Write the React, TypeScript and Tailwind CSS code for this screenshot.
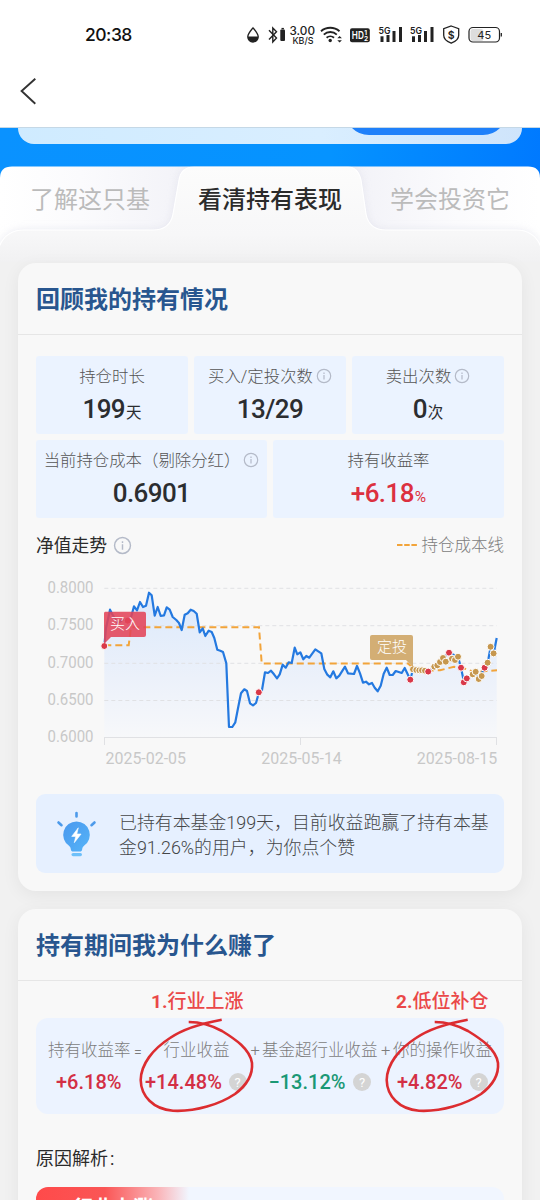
import type { ReactNode } from 'react';

type Point = [number, number];

const navLine: Point[] = [
    [68.3, 76], [70, 58], [72.7, 46], [74, 39.7], [76.7, 45], [81.7, 53], [88, 49], [94.3, 50], [98, 36.3], [101, 40.3],
    [104, 32], [107, 37], [110, 35.7], [113, 22.7], [115.7, 25.3], [118.7, 45.7], [121.7, 37], [124.7, 46], [128, 45.3],
    [130.7, 37.3], [133.7, 39.7], [136.7, 47], [140.3, 50], [143, 53], [145.7, 60], [148.7, 44.7], [151.7, 43.3],
    [154.7, 39.7], [157.7, 41], [160.7, 43.7], [163.7, 62.3], [166.7, 58.3], [169.3, 66], [172.7, 60.7], [175.7, 62],
    [178.3, 68], [181.3, 79.7], [184.3, 80.7], [187, 82], [190.3, 93.3], [193, 157], [196.3, 157], [199.3, 152.3],
    [202, 138.3], [205, 123.3], [208.3, 119.3], [211, 121], [214, 133.3], [217, 135.3], [220, 133], [223, 122.3],
    [226, 120], [229, 102.3], [232, 103], [235, 100.7], [238, 104.3], [241, 108.3], [243.7, 104.3], [246.7, 94.7],
    [249.7, 97.7], [252.7, 92.3], [255.7, 93], [258.7, 77.7], [261.3, 84.3], [264.3, 82.3], [267.3, 89.3], [270.3, 86],
    [273.3, 87.7], [279.3, 79.3], [285.3, 83.3], [288.3, 99], [291.3, 104.7], [294.3, 107.3], [297.3, 101.3],
    [300.3, 108.3], [303.3, 105.7], [309, 96.7], [312, 103.3], [318, 104], [321, 96], [324, 103.3], [327, 112.7],
    [330, 111.7], [333, 114.3], [336, 113], [338.7, 117.7], [341.7, 121.3], [344.7, 115.7], [347.7, 103.7],
    [350.7, 97.7], [353.7, 105], [356.7, 105], [359.7, 101], [365.7, 103], [368.7, 98], [371.7, 104.3], [374.3, 109.7],
    [377, 99.3], [392.3, 101.7], [401, 95], [407, 88], [413, 82.7], [422, 86.7], [425, 97.7], [428, 112.3],
    [431, 108.3], [439.7, 101.7], [442.7, 109], [448.7, 97.7], [451.7, 92.7], [454.7, 76.7], [457.7, 83.3], [460.7, 68],
];

const costLine: Point[] = [
    [68.3, 75.3], [92.7, 75.3], [95, 57.2], [223, 57.2], [225.7, 93.4], [372, 93.4], [377, 98], [390, 100.5],
    [404, 100.3], [418, 96.7], [430, 99], [440, 102.5], [450, 101], [461, 100.3],
];

const trades: { x: number; y: number; buy?: boolean }[] = [
    { x: 68.3, y: 76, buy: true },
    { x: 91.7, y: 50.7, buy: true },
    { x: 222.8, y: 122.3, buy: true },
    { x: 374.3, y: 109.7, buy: true },
    { x: 377, y: 99.3 },
    { x: 380.3, y: 100 },
    { x: 383.3, y: 100.3 },
    { x: 386, y: 100.3 },
    { x: 389, y: 100.7 },
    { x: 392.2, y: 101.6, buy: true },
    { x: 398.3, y: 96.7 },
    { x: 401.3, y: 95.3 },
    { x: 404, y: 92 },
    { x: 407, y: 88 },
    { x: 409.8, y: 91.7 },
    { x: 413, y: 82.7, buy: true },
    { x: 416, y: 88.7 },
    { x: 419, y: 90 },
    { x: 422, y: 86.7 },
    { x: 425, y: 97.7, buy: true },
    { x: 427.8, y: 112.3, buy: true },
    { x: 430.8, y: 108.4, buy: true },
    { x: 436.7, y: 104.3 },
    { x: 439.7, y: 101.8 },
    { x: 442.7, y: 109 },
    { x: 445.7, y: 106 },
    { x: 448.6, y: 97.7, buy: true },
    { x: 451.6, y: 92.7 },
    { x: 454.6, y: 76.8 },
    { x: 457.6, y: 83.4 },
];

const yTicks = [
    { y: 18.3, label: '0.8000' },
    { y: 55.7, label: '0.7500' },
    { y: 93.3, label: '0.7000' },
    { y: 130.5, label: '0.6500' },
    { y: 167.5, label: '0.6000' },
];

const xTicks = [
    { x: 69.5, label: '2025-02-05' },
    { x: 225.3, label: '2025-05-14' },
    { x: 380.7, label: '2025-08-15' },
];

const toPoints = (points: Point[]) => points.map((p) => p.join(',')).join(' ');

function InfoIcon({ className }: { className?: string }) {
    return (
        <svg viewBox="0 0 16 16" className={className} fill="none" stroke="#b4bac8" strokeWidth="1.2">
            <circle cx="8" cy="8" r="6.7" />
            <path d="M8 7v4.6M8 4.4v1.5" />
        </svg>
    );
}

function StatusBar() {
    return (
        <div className="flex h-[69px] items-center pl-[85px] font-[Inter,sans-serif]">
            <span className="w-[160px] text-[17.5px] font-medium leading-none tracking-[-0.5px] text-[#111]">20:38</span>
            <svg width="260" height="28" viewBox="245 21 260 28" fill="none" stroke="#222" className="shrink-0">
                {/* drop */}
                <path d="M253 27.8c-2.2 2.8-5.2 6-5.2 9a5.2 5.2 0 0 0 10.4 0c0-3-3-6.2-5.2-9z" strokeWidth="1.3" />
                <path d="M247.6 36.5h10.8a5.4 5.4 0 0 1-10.8 0z" fill="#222" stroke="none" />
                {/* bluetooth */}
                <path d="M269 30.300l7.500 7.700-3.700 4v-14l3.700 3.800-7.500 7.700" strokeWidth="1.4" />
                <rect x="280.3" y="29.5" width="4.7" height="11.5" rx="1" fill="#222" stroke="none" />
                <path d="M281.5 28.6h2.4" strokeWidth="1.4" />
                <text x="289.5" y="34.8" fill="#222" stroke="none" fontSize="11.5" fontWeight="500" textLength="25.5" lengthAdjust="spacingAndGlyphs">3.00</text>
                <text x="292.5" y="44" fill="#222" stroke="none" fontSize="9.5" fontWeight="500" textLength="21" lengthAdjust="spacingAndGlyphs">KB/S</text>
                {/* wifi */}
                <g strokeWidth="1.9">
                    <path d="M321 31.2a14 14 0 0 1 18.5 0" />
                    <path d="M323.8 34.6a9.5 9.5 0 0 1 13 0" />
                    <path d="M326.6 37.8a5.5 5.5 0 0 1 7.4 0" />
                </g>
                <circle cx="330.2" cy="40.5" r="1.7" fill="#222" stroke="none" />
                <path d="M339.6 36l2.300 2.300h-4.600zM339.6 42.600l2.300-2.300h-4.600z" fill="#222" stroke="none" />
                {/* HD */}
                <rect x="350" y="28.2" width="19.8" height="14" rx="2" fill="#222" stroke="none" />
                <text x="351.8" y="39" fill="#fff" stroke="none" fontSize="10.5" fontWeight="600" textLength="12" lengthAdjust="spacingAndGlyphs">HD</text>
                <text x="364.3" y="35" fill="#fff" stroke="none" fontSize="6.5" fontWeight="700">1</text>
                <text x="364" y="41" fill="#fff" stroke="none" fontSize="6.5" fontWeight="700">2</text>
                {/* signal */}
                {[379, 410.5].map((x) => (
                    <g key={x} fill="#222" stroke="none">
                        <text x={x - 0.5} y="33.5" fontSize="9" fontWeight="600" textLength="12" lengthAdjust="spacingAndGlyphs">5G</text>
                        <rect x={x + 1.5} y="36.3" width="3" height="5.700" />
                        <rect x={x + 7.5} y="35" width="3" height="7" />
                        <rect x={x + 13.5} y="31" width="3" height="11" />
                        <rect x={x + 20} y="27" width="3" height="15" />
                    </g>
                ))}
                {/* shield */}
                <path d="M451.2 26l7.500 2.700v6.500c0 3.700-3 6.200-7.500 8-4.500-1.800-7.500-4.300-7.500-8v-6.500z" strokeWidth="1.3" />
                <text x="451.2" y="38.500" textAnchor="middle" fill="#222" stroke="none" fontSize="10.5" fontWeight="600">$</text>
                {/* battery */}
                <rect x="470.500" y="29" width="13" height="12" rx="2.500" fill="#ddd" stroke="none" />
                <rect x="469" y="27.5" width="30.5" height="14.5" rx="4" strokeWidth="1.2" />
                <path d="M501.3 33v3.500" strokeWidth="1.3" />
                <text x="484.200" y="38.700" textAnchor="middle" fill="#222" stroke="none" fontSize="11" textLength="14">45</text>
            </svg>
        </div>
    );
}

function Header() {
    return (
        <header className="h-[127px] bg-white">
            <StatusBar />
            <svg width="20" height="30" viewBox="0 0 20 30" className="ml-[18px] mt-[7px]" fill="none" stroke="#333" strokeWidth="1.9">
                <path d="M17.3 2.7L3.6 15l13.7 12.8" />
            </svg>
        </header>
    );
}

function Tabs() {
    return (
        <div className="relative h-[64px]">
            <svg width="540" height="96" viewBox="0 0 540 96" className="absolute left-0 top-0">
                <defs>
                    <linearGradient id="tabLeft">
                        <stop offset="0" stopColor="#fff" />
                        <stop offset="0.3" stopColor="#fbfbfd" />
                        <stop offset="1" stopColor="#ececf4" />
                    </linearGradient>
                    <linearGradient id="tabRight">
                        <stop offset="0" stopColor="#ececf4" />
                        <stop offset="0.7" stopColor="#fbfbfd" />
                        <stop offset="1" stopColor="#fff" />
                    </linearGradient>
                    <linearGradient id="sheet" x1="0" y1="0" x2="0" y2="1">
                        <stop offset="0" stopColor="#fcfcfc" />
                        <stop offset="0.7" stopColor="#f7f7f8" />
                        <stop offset="1" stopColor="#f1f1f2" />
                    </linearGradient>
                    <filter id="tabShadow" x="-10%" y="-20%" width="120%" height="140%">
                        <feGaussianBlur stdDeviation="4" />
                    </filter>
                    <clipPath id="tabClip">
                        <path d="M0 96V12Q0 0.500 12 0.500H528Q540 0.500 540 12V96z" />
                    </clipPath>
                </defs>
                <g clipPath="url(#tabClip)">
                    <rect width="270" height="96" fill="url(#tabLeft)" />
                    <rect x="270" width="270" height="96" fill="url(#tabRight)" />
                    <path d="M-2 96V84Q4 64 24 64H153Q170 64 173 48L179 14Q181 0 194 0H348Q358 0 361 14L366 48Q369 64 386 64H516Q536 64 542 84V96z" fill="#d9dae6" opacity="0.55" filter="url(#tabShadow)" />
                    <path d="M-2 97V84Q4 64 24 64H153Q170 64 173 48L179 14Q181 1 194 1H348Q358 1 361 14L366 48Q369 64 386 64H516Q536 64 542 84V97z" fill="url(#sheet)" stroke="#fff" strokeWidth="1.2" />
                </g>
            </svg>
            <div className="relative flex h-[64px] items-center pt-[4px] text-[24px] leading-none text-[#bbb]">
                <span className="w-[180px] pl-[30px]">了解这只基</span>
                <span className="w-[180px] text-center font-medium text-[#2b2b2b]">看清持有表现</span>
                <span className="w-[180px] pl-[30px]">学会投资它</span>
            </div>
        </div>
    );
}

function Card({ title, className, children }: { title: string; className: string; children: ReactNode }) {
    return (
        <section className={`mx-[18px] rounded-[18px] bg-[#f8f8f8] shadow-[0_4px_18px_rgba(0,0,0,0.06)] ${className}`}>
            <h2 className="flex h-[72px] items-center border-b border-[#e6e6e6] px-[18px] pt-[3px] text-[24px] font-bold leading-none text-[#28568f]">
                {title}
            </h2>
            {children}
        </section>
    );
}

interface StatProps {
    label: string;
    value: string;
    unit?: string;
    info?: boolean;
    red?: boolean;
}

function Stat({ label, value, unit, info, red }: StatProps) {
    return (
        <div className="flex h-[78px] flex-col items-center rounded-[3px] bg-[#ebf3ff]">
            <div className="mt-[10px] flex h-[20px] items-center whitespace-nowrap text-[16.4px] font-light leading-none text-[#555]">
                <span className="pt-[3px]">{label}</span>
                {info && <InfoIcon className="ml-[3px] size-[16px] shrink-0" />}
            </div>
            <div className={`mt-[9px] flex h-[28px] items-baseline leading-[28px] ${red ? 'text-[#dc3040]' : 'text-[#2b2d30]'}`}>
                <span className="text-[26px] font-medium tracking-[-0.6px]">{value}</span>
                {unit && <span className="ml-px text-[15.5px]">{unit}</span>}
            </div>
        </div>
    );
}

function TrendChart() {
    return (
        <svg width="468" height="210" viewBox="0 0 468 210" className="block" fill="none">
            <defs>
                <linearGradient id="area" x1="0" y1="20" x2="0" y2="168" gradientUnits="userSpaceOnUse">
                    <stop offset="0" stopColor="#dbe9fc" />
                    <stop offset="0.6" stopColor="#ecf1fa" />
                    <stop offset="1" stopColor="#f7f8fa" />
                </linearGradient>
            </defs>
            <polygon points={`68.3,167.5 ${toPoints(navLine)} 460.7,167.5`} fill="url(#area)" />
            {yTicks.map(({ y, label }) => (
                <g key={label}>
                    <path d={`M68.3 ${y}H460.7`} stroke="#e0e1e4" strokeDasharray="4 3" />
                    <text x="11.5" y={y + 4.5} fontSize="16" fill="#c8c8c8" textLength="46" lengthAdjust="spacingAndGlyphs">{label}</text>
                </g>
            ))}
            <path d="M68.5 167.5V175M264.5 167.5V175M460.5 167.5V175M68 167.5H461" stroke="#e0e1e4" />
            {xTicks.map(({ x, label }) => (
                <text key={label} x={x} y="194" fontSize="16" fill="#c8c8c8" textLength="80.5" lengthAdjust="spacingAndGlyphs">{label}</text>
            ))}
            <polyline points={toPoints(costLine)} stroke="#f2a43a" strokeWidth="2" strokeDasharray="7 4" />
            <polyline points={toPoints(navLine)} stroke="#2479e0" strokeWidth="2.2" strokeLinejoin="round" />
            {trades.map(({ x, y, buy }) => (
                <circle key={x} cx={x} cy={y} r="3.5" fill={buy ? '#d93848' : '#c6974e'} stroke="#fff" strokeWidth="1" />
            ))}
            <path d="M69 41.7H108a2 2 0 0 1 2 2V65a2 2 0 0 1-2 2H75L68 74V43.7a2 2 0 0 1 1-2z" fill="#e24459" fillOpacity="0.88" />
            <text x="74" y="58.5" fontSize="15" fill="#fff" fontWeight="300">买入</text>
            <path d="M336 65H375a2 2 0 0 1 2 2V97L370 90H336a2 2 0 0 1-2-2V67a2 2 0 0 1 2-2z" fill="#cda361" fillOpacity="0.88" />
            <text x="341" y="82" fontSize="15" fill="#fff" fontWeight="300">定投</text>
        </svg>
    );
}

function BulbIcon() {
    return (
        <svg width="42" height="48" viewBox="0 0 42 48" fill="none">
            <defs>
                <linearGradient id="bulb" x1="0" y1="0" x2="1" y2="1">
                    <stop offset="0" stopColor="#4a98ee" />
                    <stop offset="1" stopColor="#55b4f8" />
                </linearGradient>
            </defs>
            <path d="M20.500 3v3.500M2.500 12.500l3 2.700M38.500 12.500l-3 2.700" stroke="#4d9aea" strokeWidth="2.600" strokeLinecap="round" />
            <path d="M20.500 11.500a13.300 13.300 0 0 1 7.500 24.300c-1.500 1.200-1.600 2.200-1.900 4-.200 1.200-.900 1.800-2 1.800h-7.200c-1.100 0-1.800-.600-2-1.800-.300-1.800-.400-2.800-1.900-4A13.300 13.300 0 0 1 20.500 11.500z" fill="url(#bulb)" />
            <path d="M22.300 17.800l-6.600 8.600h4l-1.400 6.300 6.800-8.700h-4.300z" fill="#fff" stroke="#fff" strokeWidth="0.600" strokeLinejoin="round" />
            <rect x="15.500" y="43" width="10.500" height="3.200" rx="1.600" fill="#6dc0fa" />
        </svg>
    );
}

function QuestionIcon() {
    return (
        <span className="flex size-[18px] shrink-0 items-center justify-center rounded-full bg-[#d4d4d4] text-[13px] font-normal leading-none text-white">
            ?
        </span>
    );
}

function HandCircle({ className }: { className: string }) {
    return (
        <svg width="120" height="100" viewBox="100 0 120 100" fill="none" className={`absolute top-0 ${className}`}>
            <path
                d="M185.7 1.7C165 5.500 147 11 134 20C117 31 105 46 104.7 62C105 78 117 91 137 92.8C160 94 184 86 199 76C211 67 217 57 216 45C214 31 199 21 186 13C175 7 164 4 152.7 4"
                stroke="#dc2c30"
                strokeWidth="2.6"
            />
        </svg>
    );
}

function Breakdown() {
    return (
        <div className="relative mx-[18px] h-[96px] rounded-[12px] bg-[#ecf3ff]">
            <div className="flex h-[66px] items-center whitespace-nowrap pl-[12px] pt-px text-[16.5px] font-light leading-none text-[#7c7c7c]">
                <span className="w-[86px]">持有收益率</span>
                <span className="w-[29.5px] text-[14px]">=</span>
                <span className="w-[87px]">行业收益</span>
                <span className="w-[11.5px]">+</span>
                <span className="w-[119px]">基金超行业收益</span>
                <span className="w-[12px]">+</span>
                <span>你的操作收益</span>
            </div>
            <div className="-mt-[12px] flex h-[20px] items-center whitespace-nowrap pl-[20px] text-[20px] font-medium leading-none text-[#d32f45]">
                <span className="w-[89px]">+6.18%</span>
                <span className="w-[83.5px]">+14.48%</span>
                <QuestionIcon />
                <span className="ml-[22px] w-[84.5px] text-[#1a9875]">−13.12%</span>
                <QuestionIcon />
                <span className="ml-[26px] w-[72.5px]">+4.82%</span>
                <QuestionIcon />
            </div>
            <HandCircle className="left-[100px]" />
            <HandCircle className="left-[346.3px]" />
        </div>
    );
}

export default function App() {
    return (
        <div className="h-[1200px] w-[540px] overflow-hidden bg-[#f1f1f1] font-[Roboto,'Noto_Sans_CJK_SC',sans-serif]">
            <Header />
            <div className="bg-[linear-gradient(100deg,#0a92ff_0%,#0593ff_60%,#0078ff_100%)]">
                <div className="flex h-[39px] items-start border-t border-[#c5d8e6] px-[18px]">
                    <div className="flex h-[16px] w-full justify-end rounded-b-[16px] bg-[linear-gradient(90deg,#cfebff,#d9eeff_60%,#cfe4fb)] pr-[22px]">
                        <svg width="148" height="8" viewBox="0 0 148 8">
                            <path d="M0 0H148Q141 7 131 7H17Q7 7 0 0z" fill="#1f80fa" />
                        </svg>
                    </div>
                </div>
                <Tabs />
            </div>

            <div className="relative pt-[33px]">
                <Card title="回顾我的持有情况" className="h-[628px]">
                    <div className="px-[18px] pt-[21px]">
                        <div className="grid grid-cols-3 gap-[6px]">
                            <Stat label="持仓时长" value="199" unit="天" />
                            <Stat label="买入/定投次数" value="13/29" info />
                            <Stat label="卖出次数" value="0" unit="次" info />
                        </div>
                        <div className="mt-[6px] grid grid-cols-2 gap-[6px]">
                            <Stat label="当前持仓成本（剔除分红）" value="0.6901" info />
                            <Stat label="持有收益率" value="+6.18" unit="%" red />
                        </div>
                        <div className="mt-[17px] flex h-[20px] items-center leading-none">
                            <span className="pt-[2px] text-[17.8px] text-[#2b2b2b]">净值走势</span>
                            <InfoIcon className="ml-[6px] size-[19px]" />
                            <svg width="20" height="2" className="ml-auto mr-[5px]">
                                <path d="M0 1h20" stroke="#f2a43a" strokeWidth="2" strokeDasharray="5.5 1.7" />
                            </svg>
                            <span className="pt-[3px] text-[16.5px] font-light text-[#7c7c7c]">持仓成本线</span>
                        </div>
                        <div className="mt-[15px]">
                            <TrendChart />
                        </div>
                        <div className="mt-[14px] flex h-[79px] items-center rounded-[9px] bg-[#e6f0ff] pl-[20px]">
                            <BulbIcon />
                            <p className="ml-[21px] mt-[3px] whitespace-nowrap text-[17.9px] font-light leading-[25px] text-[#444648]">
                                已持有本基金199天，目前收益跑赢了持有本基
                                <br />
                                金91.26%的用户，为你点个赞
                            </p>
                        </div>
                    </div>
                </Card>

                <Card title="持有期间我为什么赚了" className="mt-[18px] h-[400px]">
                    <div className="flex h-[37px] items-center pl-[133px] pt-[3px] text-[19px] font-medium leading-none text-[#ea4848]">
                        <span className="w-[245px]">
                            <b>1.</b>行业上涨
                        </span>
                        <span>
                            <b>2.</b>低位补仓
                        </span>
                    </div>
                    <Breakdown />
                    <div className="mt-[34px] flex h-[20px] items-center px-[18px] pt-[2px] text-[18px] leading-none text-[#2b2b2b]">
                        原因解析<span className="ml-[2px]">:</span>
                    </div>
                    <div className="mx-[18px] mt-[19px] h-[60px] overflow-hidden rounded-t-[12px] bg-[#f1f6ff]">
                        <div className="h-full w-[153px] bg-[linear-gradient(90deg,#ff4a4a_0%,#fa5656_45%,#fab5b9_80%,#f1f6ff_100%)] pl-[37px] pt-[11px] text-[20px] font-bold leading-[20px] text-white">
                            行业上涨
                        </div>
                    </div>
                </Card>
            </div>
        </div>
    );
}
